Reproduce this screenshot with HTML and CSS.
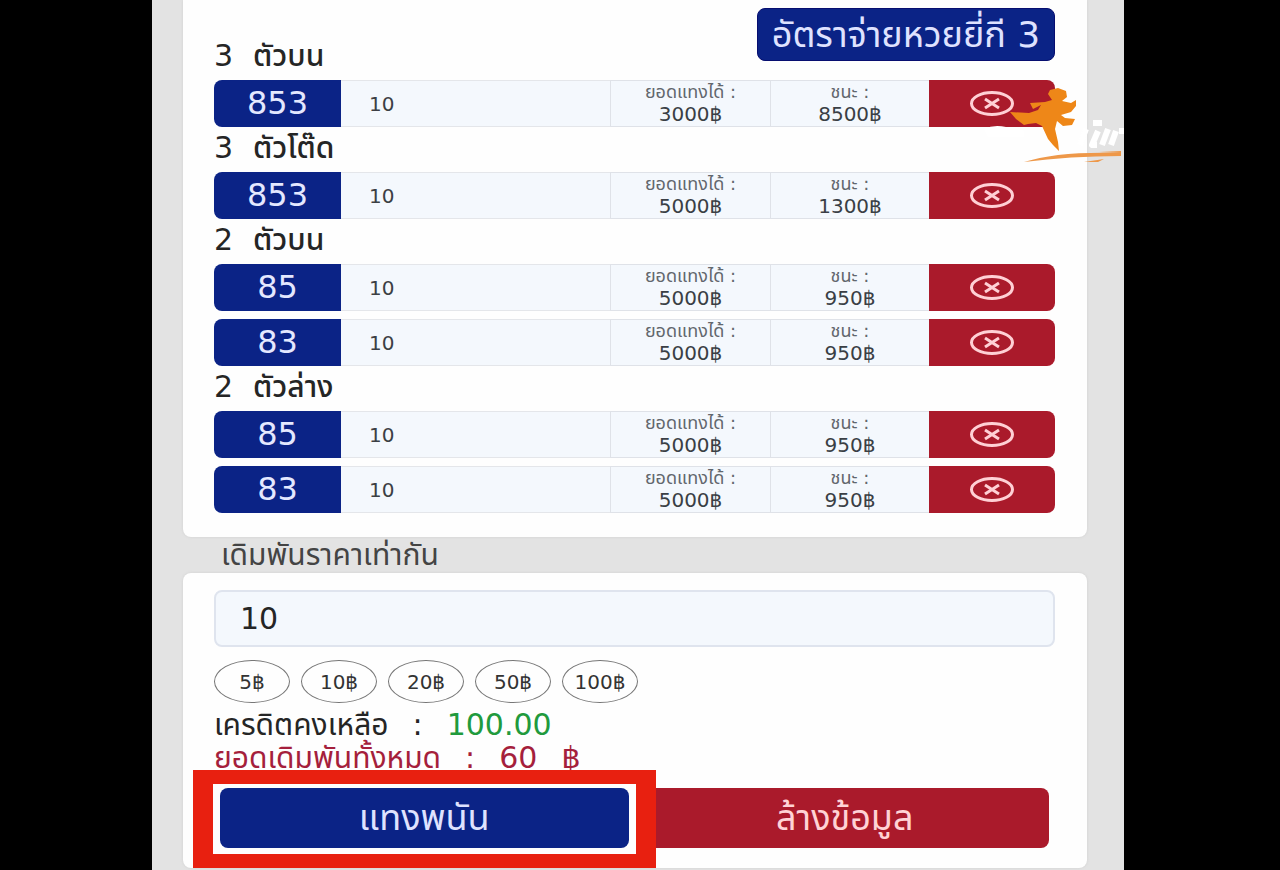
FILE: index.html
```html
<!DOCTYPE html>
<html lang="th">
<head>
<meta charset="utf-8">
<title>หวยยี่กี</title>
<link rel="stylesheet" href="styles.css">
</head>
<body>
<svg class="defs" aria-hidden="true">
  <symbol id="remove" viewBox="0 0 46 26">
    <ellipse cx="23" cy="12.500" rx="20.500" ry="11" fill="none" stroke="currentColor" stroke-width="3"/>
    <path d="M16 8L30 17M30 8L16 17" fill="none" stroke="currentColor" stroke-width="3"/>
  </symbol>
</svg>
<main class="page">
  <section class="panel bets">
    <header class="top">
      <h2 class="group"><span>3</span> <span>ตัวบน</span></h2>
      <button class="rate">อัตราจ่ายหวยยี่กี 3</button>
    </header>
    <div class="bet">
      <span class="number">853</span><input class="amount" aria-label="จำนวนเงิน 853" value="10">
      <p class="info"><small>ยอดแทงได้ :</small><span>3000฿</span></p>
      <p class="info"><small>ชนะ :</small><span>8500฿</span></p>
      <button class="remove" aria-label="ลบ"><svg><use href="#remove"/></svg></button>
    </div>
    <h2 class="group"><span>3</span> <span>ตัวโต๊ด</span></h2>
    <div class="bet">
      <span class="number">853</span><input class="amount" aria-label="จำนวนเงิน 853 โต๊ด" value="10">
      <p class="info"><small>ยอดแทงได้ :</small><span>5000฿</span></p>
      <p class="info"><small>ชนะ :</small><span>1300฿</span></p>
      <button class="remove" aria-label="ลบ"><svg><use href="#remove"/></svg></button>
    </div>
    <h2 class="group"><span>2</span> <span>ตัวบน</span></h2>
    <div class="rows">
      <div class="bet">
        <span class="number">85</span><input class="amount" aria-label="จำนวนเงิน 85 บน" value="10">
        <p class="info"><small>ยอดแทงได้ :</small><span>5000฿</span></p>
        <p class="info"><small>ชนะ :</small><span>950฿</span></p>
        <button class="remove" aria-label="ลบ"><svg><use href="#remove"/></svg></button>
      </div>
      <div class="bet">
        <span class="number">83</span><input class="amount" aria-label="จำนวนเงิน 83 บน" value="10">
        <p class="info"><small>ยอดแทงได้ :</small><span>5000฿</span></p>
        <p class="info"><small>ชนะ :</small><span>950฿</span></p>
        <button class="remove" aria-label="ลบ"><svg><use href="#remove"/></svg></button>
      </div>
    </div>
    <h2 class="group"><span>2</span> <span>ตัวล่าง</span></h2>
    <div class="rows">
      <div class="bet">
        <span class="number">85</span><input class="amount" aria-label="จำนวนเงิน 85 ล่าง" value="10">
        <p class="info"><small>ยอดแทงได้ :</small><span>5000฿</span></p>
        <p class="info"><small>ชนะ :</small><span>950฿</span></p>
        <button class="remove" aria-label="ลบ"><svg><use href="#remove"/></svg></button>
      </div>
      <div class="bet">
        <span class="number">83</span><input class="amount" aria-label="จำนวนเงิน 83 ล่าง" value="10">
        <p class="info"><small>ยอดแทงได้ :</small><span>5000฿</span></p>
        <p class="info"><small>ชนะ :</small><span>950฿</span></p>
        <button class="remove" aria-label="ลบ"><svg><use href="#remove"/></svg></button>
      </div>
    </div>
  </section>
  <label class="caption" for="stake">เดิมพันราคาเท่ากัน</label>
  <section class="panel summary">
    <input class="stake" id="stake" value="10">
    <div class="chips">
      <button class="chip">5฿</button><button class="chip">10฿</button><button class="chip">20฿</button><button class="chip">50฿</button><button class="chip">100฿</button>
    </div>
    <p class="line"><span>เครดิตคงเหลือ</span> <span>:</span> <span class="credit">100.00</span></p>
    <p class="line total"><span>ยอดเดิมพันทั้งหมด</span> <span>:</span> <span>60</span> <span>฿</span></p>
    <div class="actions">
      <button class="action submit">แทงพนัน</button>
      <button class="action clear">ล้างข้อมูล</button>
    </div>
  </section>
  <svg class="logo" viewBox="0 0 144 84" aria-hidden="true">
    <path fill="#fff" d="M4 46Q14 41 26 44L34 44L44 48V54H8Z"/>
    <g fill="none" stroke="#fff" stroke-width="6">
      <path d="M106 46L100 62M118 48L112 62H117M128 46L122 62M136 48L131 62M139 48H144M113 40H122" stroke-linejoin="round"/>
    </g>
    <path fill="#ee8718" d="M30 29L49 30L58 27L61 22L53 26L50 20L65 19L72 17L68 11L70 7L78 5L86 8L87 14L82 18L91 20L96 17L96 23L91 29L81 32L85 35L95 36L92 42L83 43L77 38L75 46L78 59L79 68L73 62L68 56L62 43L56 40L48 41L44 42L36 36Z"/>
    <path fill="#ee9849" d="M44 79Q78 68 141 70V73Q90 73 44 79ZM104 79L124 76L118 79ZM119 69L141 68V70Z"/>
  </svg>
</main>
</body>
</html>
```
FILE: styles.css
```css
* { box-sizing: border-box; }
body {
  margin: 0;
  padding: 0 156px 0 152px;
  background: #000;
  color: #252525;
  font-family: "DejaVu Sans", "Noto Sans Thai", "Noto Sans", sans-serif;
}
button, input { font-family: inherit; color: inherit; margin: 0; }
button { border: 0; padding: 0; }
h2, p { margin: 0; font-weight: 400; }
.defs { position: absolute; width: 0; height: 0; }
.page { position: relative; background: #e3e3e3; padding: 0 37px 2px 31px; }
.panel { background: #fefefe; border-radius: 8px; padding: 0 32px 0 31px; box-shadow: 0 0 3px #d0d0d0; }
.bets { border-radius: 0 0 8px 8px; padding-top: 8px; padding-bottom: 24px; }
.top { display: flex; justify-content: space-between; align-items: flex-end; }
.rate {
  width: 298px; height: 53px; margin-bottom: 19px;
  border-radius: 8px; border: 1px solid #070e70;
  background: #0b2386; color: #dfe2ff; font-size: 36px; line-height: 48px; white-space: nowrap;
}
.group { display: flex; gap: 20px; font-size: 30px; line-height: 42px; padding-bottom: 3px; font-weight: 500; }
.rows { display: grid; gap: 8px; }
.bet {
  display: grid; grid-template-columns: 127fr 269fr 160fr 159fr 126fr;
  height: 47px;
}
.number {
  border-radius: 8px 0 0 8px; background: #0b2386; color: #e4e8ff;
  font-size: 32px; line-height: 46px; text-align: center;
}
.amount {
  min-width: 0; width: 100%; padding: 0 28px; border: solid #e4e6ea; border-width: 1px 0;
  border-radius: 0; background: #f4f8fd; color: #3c3f44; font-size: 20px;
}
.info {
  display: flex; flex-direction: column; align-items: center; background: #f4f8fd;
  border: 1px solid #dfe2e8; border-width: 1px 0 1px 1px;
  color: #3a3f45; font-size: 20px; line-height: 23px; white-space: nowrap;
}
.info small { font-size: 18px; line-height: 22px; color: #62676d; }
.remove {
  display: grid; place-items: center; border-radius: 0 8px 8px 0;
  background: #aa1a2b; color: #ffd0d5;
}
.remove svg { width: 46px; height: 26px; }
.caption { display: block; padding-left: 38px; font-size: 30px; line-height: 36px; color: #444; }
.summary { padding-top: 17px; padding-bottom: 20px; }
.stake {
  display: block; width: 100%; height: 57px; padding: 0 24px;
  border: 2px solid #dfe4ee; border-radius: 8px; background: #f4f8fd; font-size: 30px;
}
.chips { display: flex; gap: 11px; padding: 13px 0 5px; }
.chip {
  width: 76px; height: 43px; border: 1px solid #777; border-radius: 50%;
  background: #fefefe; color: #333; font-size: 20px; white-space: nowrap;
}
.line { display: flex; gap: 24px; font-size: 30px; line-height: 33px; white-space: nowrap; }
.total { color: #a51f3c; }
.credit { color: #219a3d; }
.actions { display: grid; grid-template-columns: 1fr 1fr; gap: 12px; padding: 14px 6px 0; }
.action { height: 60px; border-radius: 8px; font-size: 36px; line-height: 56px; }
.submit { position: relative; background: #0b2386; color: #dfe2ff; }
.submit::before {
  content: ""; position: absolute; inset: -18px -27px -20px;
  border: solid #e82010; border-width: 14px 20px;
}
.clear { background: #aa1a2b; color: #ffd2d5; }
.logo { position: absolute; top: 83px; right: 0; width: 144px; height: 84px; }
```
